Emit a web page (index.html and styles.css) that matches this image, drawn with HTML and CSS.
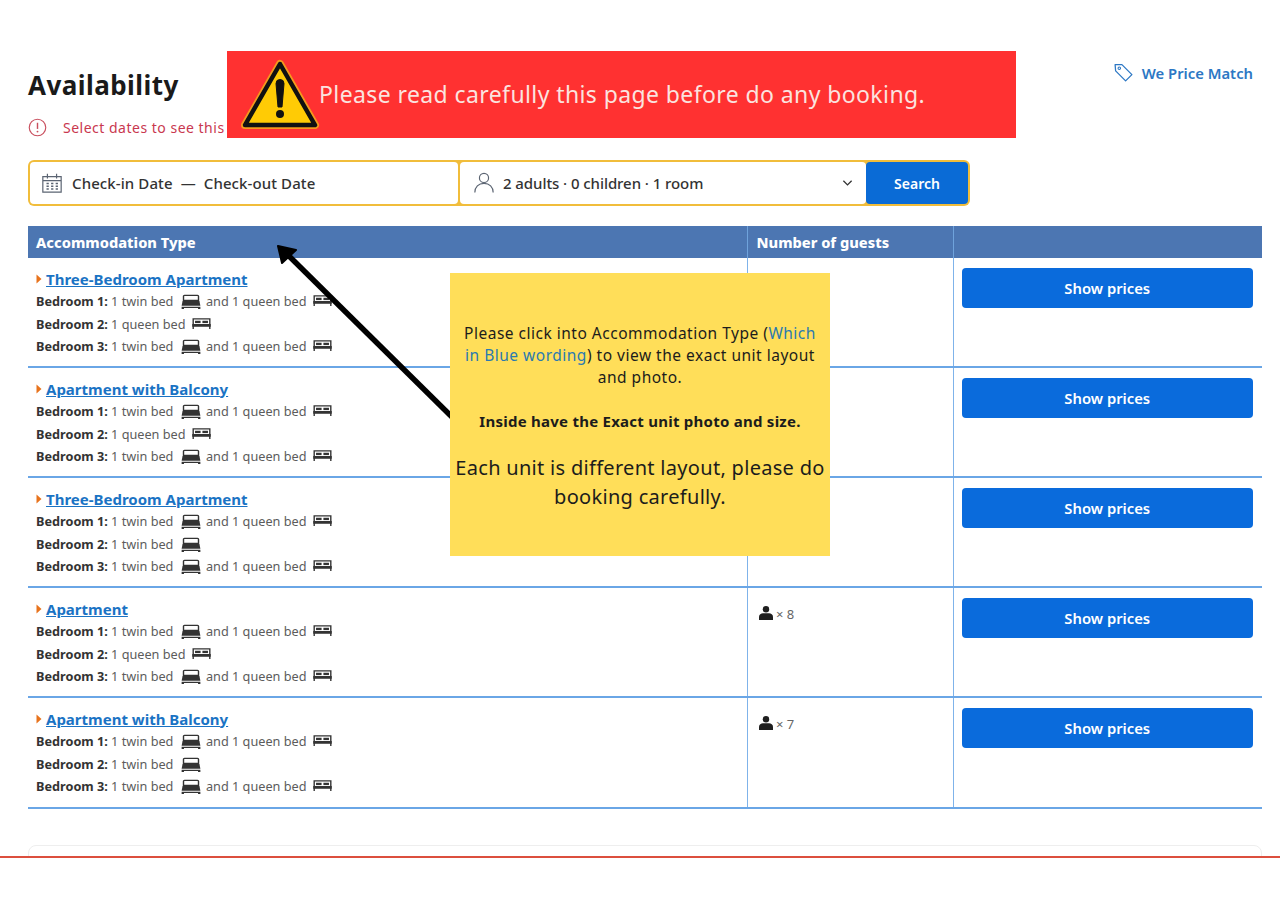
FILE: index.html
```html
<!DOCTYPE html>
<html lang="en">
<head>
<meta charset="utf-8">
<title>Availability</title>
<link rel="stylesheet" href="styles.css">
</head>
<body>
<svg class="sprites" width="0" height="0" aria-hidden="true">
  <symbol id="twin" viewBox="0 0 20 16"><path d="M3 1.500h14a1 1 0 0 1 1 1V7H2V2.500a1 1 0 0 1 1-1z" fill="none" stroke="#333" stroke-width="1.500"/><path d="M1 7.500h18l1 5H0z" fill="#333"/><path d="M0 13.500h20V16H17.500v-1h-15v1H0z" fill="#333"/></symbol>
  <symbol id="queen" viewBox="0 0 20 13"><path d="M1 12V1h18v11" fill="none" stroke="#333" stroke-width="1.500"/><rect x="3" y="3" width="6" height="2.500" fill="#333"/><rect x="11" y="3" width="6" height="2.500" fill="#333"/><rect x="0" y="6.500" width="20" height="3" fill="#333"/></symbol>
  <symbol id="guest" viewBox="0 0 14 14"><circle cx="7" cy="3.200" r="3.200" fill="#1f1f1f"/><path d="M0 14v-3.200C0 8.500 2 7.300 4 7.300h6c2 0 4 1.200 4 3.500V14z" fill="#1f1f1f"/></symbol>
  <symbol id="caret" viewBox="0 0 6 10"><path d="M0.500 0.500 5.500 5 0.500 9.500z" fill="#e8731c"/></symbol>
</svg>

<main class="page">
  <header class="head">
    <div>
      <h2 class="title">Availability</h2>
      <p class="alert">
        <svg class="alert-icon" viewBox="0 0 20 20"><circle cx="10" cy="10" r="8.700" fill="none" stroke="#c9505f" stroke-width="1.200"/><path d="M10 5v6.500" stroke="#c9505f" stroke-width="1.500"/><circle cx="10" cy="14.300" r="1" fill="#c9505f"/></svg>
        <span>Select dates to see this property's availability and prices</span>
      </p>
    </div>
    <a class="match">
      <svg class="tag" viewBox="0 0 20 20"><path d="M2 2.500h6.500L18 12l-6 6-9.500-9.500z" fill="none" stroke="#2c77c4" stroke-width="1.200" stroke-linejoin="round"/><circle cx="6" cy="6" r="1.200" fill="none" stroke="#2c77c4"/></svg>
      We Price Match
    </a>
  </header>

  <form class="search">
    <div class="field date">
      <svg class="cal" viewBox="0 0 24 24"><path d="M2 5h20v17H2zM2 9.500h20M7 2v5M17 2v5" fill="none" stroke="#5b6472" stroke-width="1.300"/><path d="M6 12.500h2.500M11 12.500h2.500M16 12.500h2.500M6 15.500h2.500M11 15.500h2.500M16 15.500h2.500M6 18.500h2.500M11 18.500h2.500M16 18.500h2.500" stroke="#5b6472" stroke-width="1.500"/></svg>
      <span>Check-in Date&nbsp; —&nbsp; Check-out Date</span>
    </div>
    <div class="field people">
      <svg class="user" viewBox="0 0 24 24"><circle cx="12" cy="7" r="5" fill="none" stroke="#5b6472" stroke-width="1.300"/><path d="M2 23c0-6 4-10 10-10s10 4 10 10" fill="none" stroke="#5b6472" stroke-width="1.300"/></svg>
      <span>2 adults · 0 children · 1 room</span>
      <svg class="chev" viewBox="0 0 12 8"><path d="M1.500 1.500 6 6l4.500-4.500" fill="none" stroke="#333" stroke-width="1.400"/></svg>
    </div>
    <button class="search-btn" type="button">Search</button>
  </form>

  <table class="rooms">
    <colgroup><col class="c1"><col class="c2"><col class="c3"></colgroup>
    <thead><tr><th>Accommodation Type</th><th>Number of guests</th><th></th></tr></thead>
    <tbody>
      <tr>
        <td>
          <div class="name"><svg class="caret"><use href="#caret"/></svg><a>Three-Bedroom Apartment</a></div>
          <div class="bed"><b>Bedroom 1:</b> 1 twin bed <svg class="i-twin"><use href="#twin"/></svg> and 1 queen bed <svg class="i-queen"><use href="#queen"/></svg></div>
          <div class="bed"><b>Bedroom 2:</b> 1 queen bed <svg class="i-queen"><use href="#queen"/></svg></div>
          <div class="bed"><b>Bedroom 3:</b> 1 twin bed <svg class="i-twin"><use href="#twin"/></svg> and 1 queen bed <svg class="i-queen"><use href="#queen"/></svg></div>
        </td>
        <td class="guests"><svg class="i-guest"><use href="#guest"/></svg> × 8</td>
        <td class="act"><button class="show" type="button">Show prices</button></td>
      </tr>
      <tr>
        <td>
          <div class="name"><svg class="caret"><use href="#caret"/></svg><a>Apartment with Balcony</a></div>
          <div class="bed"><b>Bedroom 1:</b> 1 twin bed <svg class="i-twin"><use href="#twin"/></svg> and 1 queen bed <svg class="i-queen"><use href="#queen"/></svg></div>
          <div class="bed"><b>Bedroom 2:</b> 1 queen bed <svg class="i-queen"><use href="#queen"/></svg></div>
          <div class="bed"><b>Bedroom 3:</b> 1 twin bed <svg class="i-twin"><use href="#twin"/></svg> and 1 queen bed <svg class="i-queen"><use href="#queen"/></svg></div>
        </td>
        <td class="guests"><svg class="i-guest"><use href="#guest"/></svg> × 8</td>
        <td class="act"><button class="show" type="button">Show prices</button></td>
      </tr>
      <tr>
        <td>
          <div class="name"><svg class="caret"><use href="#caret"/></svg><a>Three-Bedroom Apartment</a></div>
          <div class="bed"><b>Bedroom 1:</b> 1 twin bed <svg class="i-twin"><use href="#twin"/></svg> and 1 queen bed <svg class="i-queen"><use href="#queen"/></svg></div>
          <div class="bed"><b>Bedroom 2:</b> 1 twin bed <svg class="i-twin"><use href="#twin"/></svg></div>
          <div class="bed"><b>Bedroom 3:</b> 1 twin bed <svg class="i-twin"><use href="#twin"/></svg> and 1 queen bed <svg class="i-queen"><use href="#queen"/></svg></div>
        </td>
        <td class="guests"><svg class="i-guest"><use href="#guest"/></svg> × 7</td>
        <td class="act"><button class="show" type="button">Show prices</button></td>
      </tr>
      <tr>
        <td>
          <div class="name"><svg class="caret"><use href="#caret"/></svg><a>Apartment</a></div>
          <div class="bed"><b>Bedroom 1:</b> 1 twin bed <svg class="i-twin"><use href="#twin"/></svg> and 1 queen bed <svg class="i-queen"><use href="#queen"/></svg></div>
          <div class="bed"><b>Bedroom 2:</b> 1 queen bed <svg class="i-queen"><use href="#queen"/></svg></div>
          <div class="bed"><b>Bedroom 3:</b> 1 twin bed <svg class="i-twin"><use href="#twin"/></svg> and 1 queen bed <svg class="i-queen"><use href="#queen"/></svg></div>
        </td>
        <td class="guests"><svg class="i-guest"><use href="#guest"/></svg> × 8</td>
        <td class="act"><button class="show" type="button">Show prices</button></td>
      </tr>
      <tr>
        <td>
          <div class="name"><svg class="caret"><use href="#caret"/></svg><a>Apartment with Balcony</a></div>
          <div class="bed"><b>Bedroom 1:</b> 1 twin bed <svg class="i-twin"><use href="#twin"/></svg> and 1 queen bed <svg class="i-queen"><use href="#queen"/></svg></div>
          <div class="bed"><b>Bedroom 2:</b> 1 twin bed <svg class="i-twin"><use href="#twin"/></svg></div>
          <div class="bed"><b>Bedroom 3:</b> 1 twin bed <svg class="i-twin"><use href="#twin"/></svg> and 1 queen bed <svg class="i-queen"><use href="#queen"/></svg></div>
        </td>
        <td class="guests"><svg class="i-guest"><use href="#guest"/></svg> × 7</td>
        <td class="act"><button class="show" type="button">Show prices</button></td>
      </tr>
    </tbody>
  </table>

  <div class="next-card"></div>
</main>

<aside class="banner">
  <svg class="warn" viewBox="0 0 80 72"><path d="M40 5 75 66H5z" fill="#ffcb05" stroke="#f49a1c" stroke-width="8" stroke-linejoin="round"/><path d="M40 5 75 66H5z" fill="#ffcb05" stroke="#111" stroke-width="4.500" stroke-linejoin="round"/><path d="M36 24.500a4 4 0 0 1 8 0L42 48h-4z" fill="#111" stroke="#111" stroke-linejoin="round"/><circle cx="40" cy="55" r="4" fill="#111"/></svg>
  <span>Please read carefully this page before do any booking.</span>
</aside>

<svg class="arrow" viewBox="0 0 180 176"><path d="M176 173 12 11" stroke="#000" stroke-width="5.500"/><path d="M2 2 20 6 6 19z" fill="#000" stroke="#000" stroke-width="2" stroke-linejoin="round"/></svg>

<aside class="note">
  <p class="note-a">Please click into Accommodation Type (<span class="note-blue">Which in Blue wording</span>) to view the exact unit layout and photo.</p>
  <p class="note-b">Inside have the Exact unit photo and size.</p>
  <p class="note-c">Each unit is different layout, please do booking carefully.</p>
</aside>

<div class="footer-cover"></div>
</body>
</html>
```
FILE: styles.css
```css
* { box-sizing: border-box; }
html, body { margin: 0; padding: 0; background: #fff; height: 900px; overflow: hidden; }
body { position: relative; font-family: "Noto Sans", "Open Sans", sans-serif; color: #262626; }
.sprites { position: absolute; }

.page { padding: 64px 18px 0 28px; }

.head { display: flex; justify-content: space-between; align-items: flex-start; padding-right: 9px; height: 96px; }
.title { margin: 4px 0 0; font-size: 26px; line-height: 34px; font-weight: 700; letter-spacing: 0.45px; color: #1a1a1a; }
.alert { display: flex; align-items: center; margin: 16px 0 0; font-size: 14px; line-height: 18px; letter-spacing: 0.5px; color: #c9384f; white-space: nowrap; }
.alert-icon { width: 19px; height: 19px; margin-right: 16px; }
.match { display: flex; align-items: center; gap: 8px; margin-top: -2px; font-size: 14.800px; font-weight: 600; color: #2c77c4; line-height: 20px; }
.tag { width: 21px; height: 21px; }

.search { display: flex; width: 942px; height: 46px; border-radius: 6px; background: #f1bd3b; padding: 2px; }
.field { display: flex; align-items: center; background: #fff; border-radius: 4px; font-size: 15px; font-weight: 500; color: #333; }
.date { width: 428px; margin-right: 2px; padding-left: 11px; gap: 9px; letter-spacing: 0.1px; }
.people { width: 406px; padding-left: 13px; gap: 8px; letter-spacing: -0.07px; }
.people span { flex: 1; }
.cal { width: 22px; height: 22px; }
.user { width: 22px; height: 25px; margin-top: -2px; }
.chev { width: 11px; height: 8px; margin-right: 13px; }
.search-btn { flex: 1; border: 0; border-radius: 4px; background: #0a6bd6; color: #fff; font: 600 14px "Noto Sans", sans-serif; }

.rooms { width: 1234px; margin-top: 20px; border-collapse: collapse; table-layout: fixed; }
.c1 { width: 719px; }
.c2 { width: 206px; }
.c3 { width: 309px; }
.rooms th { height: 32px; padding: 0 8px 1px 9px; background: #4c76b2; color: #fff; font-size: 14.600px; line-height: 18px; font-weight: 800; text-align: left; border-left: 1px solid #6fa3dc; }
.rooms th:first-child { border-left: 0; padding-left: 8px; }
.rooms td { height: 110px; padding: 9px 8px 0; vertical-align: top; border-bottom: 2px solid #6aa6e6; }
.rooms tr:first-child td { height: 109px; }
.rooms tr:last-child td { height: 111px; }
.rooms td + td { border-left: 1px solid #7fb3ea; }

.name { display: flex; align-items: center; height: 23px; font-size: 15px; font-weight: 700; }
.name a { color: #1a73c4; text-decoration: underline; }
.caret { width: 6px; height: 10px; margin-right: 4px; margin-top: 1px; }
.bed { height: 22.500px; font-size: 12.700px; line-height: 22px; color: #5c5c5c; white-space: nowrap; }
.bed b { color: #333; font-weight: 700; }
.i-twin { width: 20px; height: 15px; vertical-align: -3px; margin: 0 2px 0 4px; }
.i-queen { width: 19px; height: 12px; vertical-align: -1px; margin: 0 2px 0 3px; }
.rooms td.guests { padding: 17px 8px 0 11px; font-size: 13px; color: #666; line-height: 18px; }
.i-guest { width: 14px; height: 14px; vertical-align: -1px; }
.rooms td.act { padding: 10px 9px 0 8px; }
.show { display: block; width: 100%; height: 40px; border: 0; border-radius: 4px; background: #0a6bdc; color: #fff; font: 600 14.800px "Noto Sans", sans-serif; }

.next-card { height: 60px; margin-top: 36px; border: 1px solid #eee; border-radius: 8px; }

.banner { position: absolute; left: 227px; top: 51px; width: 789px; height: 87px; display: flex; align-items: center; background: #ff3131; color: #fbe3df; font-size: 23px; letter-spacing: 0.4px; padding-left: 13px; }
.banner span { margin-left: -1px; margin-top: -1px; }
.warn { width: 80px; height: 72px; }

.arrow { position: absolute; left: 276px; top: 244px; width: 180px; height: 176px; }

.note { position: absolute; left: 450px; top: 273px; width: 380px; height: 283px; padding: 49px 4px 0; background: #ffde59; color: #1c1c1c; text-align: center; }
.note p { margin: 0; }
.note-a { font-size: 15.500px; line-height: 22px; letter-spacing: 0.5px; padding: 0 6px; }
.note-blue { color: #2b7ab0; }
.note-b { margin-top: 22px !important; font-size: 15px; line-height: 22px; font-weight: 700; letter-spacing: 0.25px; }
.note-c { margin-top: 21px !important; font-size: 20px; line-height: 29px; letter-spacing: 0.3px; }

.footer-cover { position: absolute; left: 0; top: 856px; width: 1280px; height: 44px; background: #fff; border-top: 2px solid #dc4f3e; }
```
